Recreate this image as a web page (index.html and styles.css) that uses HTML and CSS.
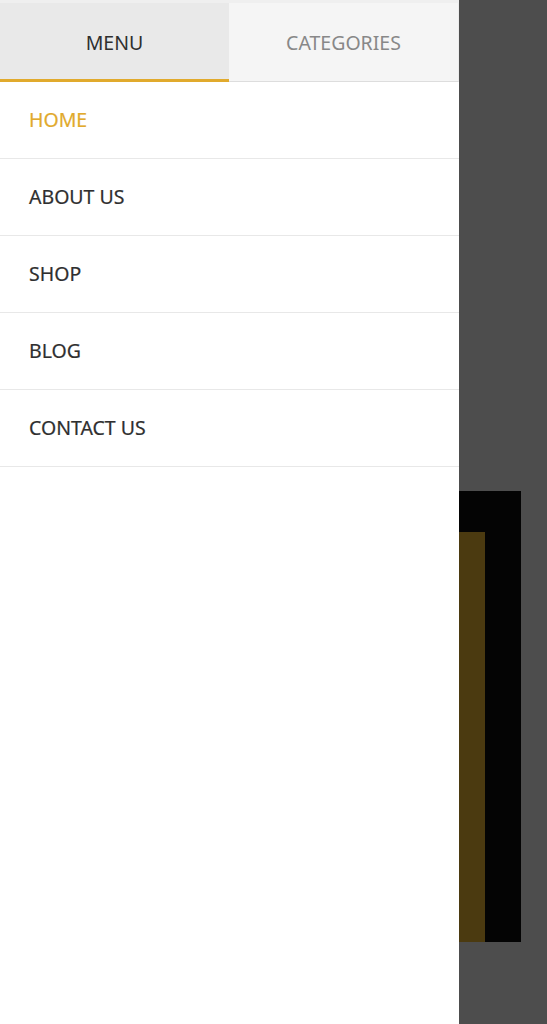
FILE: index.html
```html
<!DOCTYPE html>
<html lang="en">

<head>
  <meta charset="UTF-8" />
  <title>Menu</title>
  <link rel="stylesheet" href="styles.css">
</head>

<body>
  <div class="page">
    <div class="drawer">
      <div class="tabs">
        <button class="tab active">MENU</button>
        <button class="tab">CATEGORIES</button>
      </div>
      <ul class="menu">
        <li class="current"><a href="#">HOME</a></li>
        <li><a href="#">ABOUT US</a></li>
        <li><a href="#">SHOP</a></li>
        <li><a href="#">BLOG</a></li>
        <li><a href="#">CONTACT US</a></li>
      </ul>
    </div>

    <div class="backdrop">
      <div class="slide">
        <div class="slide-inner"></div>
      </div>
    </div>
  </div>
</body>

</html>
```

FILE: styles.css
```css
:root {
  --accent: #e1aa2d;
  --text-color: #2f2f2f;
  --border-color: #e8e8e8;
}

* {
  margin: 0;
  padding: 0;
  box-sizing: border-box;
}

body {
  font-family: 'Noto Sans', 'Open Sans', sans-serif;
  background-color: #efefef;
  color: var(--text-color);
}

.page {
  display: flex;
  height: 1024px;
  padding-top: 3px;
}

.drawer {
  width: 459px;
  flex-shrink: 0;
  background-color: #ffffff;
}

.tabs {
  display: flex;
}

.tab {
  height: 79px;
  font-family: inherit;
  font-size: 19.5px;
  border: none;
  border-bottom: 1px solid #dddddd;
  background-color: #f5f5f5;
  color: #888888;
  cursor: pointer;
}

.tab:first-child {
  width: 229px;
}

.tab:last-child {
  flex: 1;
  border-right: 1px solid #ececec;
}

.tab.active {
  background-color: #e9e9e9;
  color: #2f2f2f;
  border-bottom: 3px solid var(--accent);
  padding-top: 2px;
}

.menu {
  list-style: none;
}

.menu li {
  border-bottom: 1px solid var(--border-color);
}

.menu a {
  display: block;
  height: 76px;
  line-height: 76px;
  padding-left: 29px;
  font-size: 19.5px;
  color: var(--text-color);
  text-decoration: none;
  -webkit-text-stroke: 0.2px currentColor;
}

.menu li.current a {
  color: var(--accent);
}

.backdrop {
  flex: 1;
  background-color: #4d4d4d;
  margin-top: -3px;
  padding-top: 491px;
}

.slide {
  width: 62px;
  height: 451px;
  background-color: #040404;
  padding-top: 41px;
}

.slide-inner {
  width: 26px;
  height: 100%;
  background-color: #4b3a10;
}
```
